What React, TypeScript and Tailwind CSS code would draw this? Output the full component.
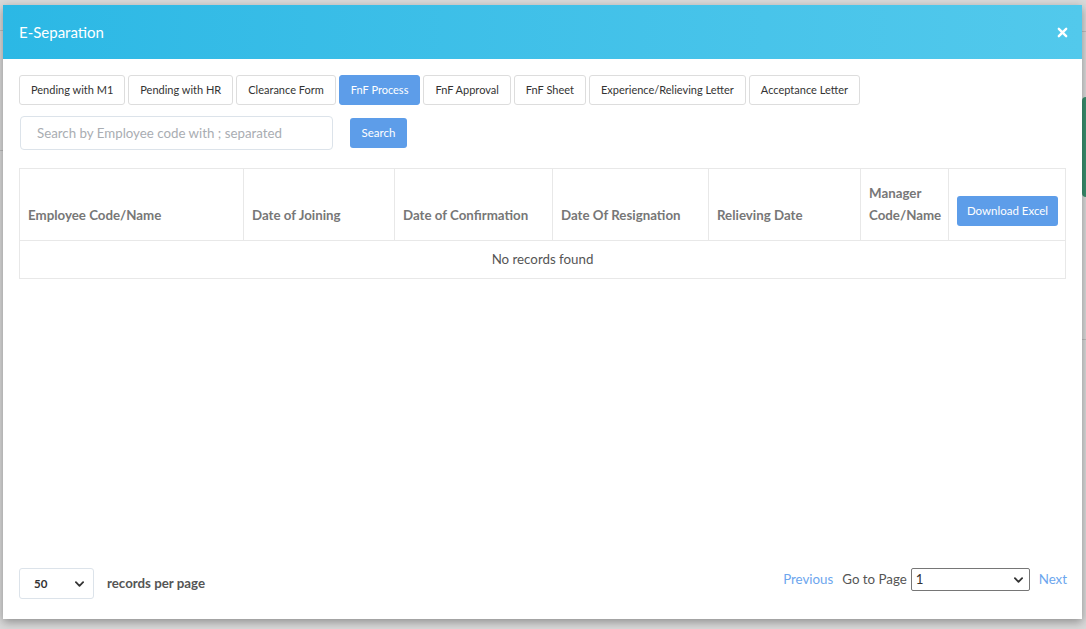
import React from "react";

const tabs = [
  "Pending with M1",
  "Pending with HR",
  "Clearance Form",
  "FnF Process",
  "FnF Approval",
  "FnF Sheet",
  "Experience/Relieving Letter",
  "Acceptance Letter",
];

const columns = [
  { label: "Employee Code/Name", w: "w-[224px]" },
  { label: "Date of Joining", w: "w-[151px]" },
  { label: "Date of Confirmation", w: "w-[158px]" },
  { label: "Date Of Resignation", w: "w-[156px]" },
  { label: "Relieving Date", w: "w-[152px]" },
  { label: "Manager Code/Name", w: "w-[88px]" },
];

function Chevron({ className }: { className?: string }) {
  return (
    <svg viewBox="0 0 10 6" className={className} fill="none">
      <path d="M1 1l4 4 4-4" stroke="currentColor" strokeWidth="2" strokeLinecap="round" strokeLinejoin="round" />
    </svg>
  );
}

export default function App() {
  const active = "FnF Process";

  return (
    <div
      className="relative w-[1086px] h-[629px] overflow-hidden bg-[#d9d9d9]"
      style={{ fontFamily: "Lato, 'Noto Sans', sans-serif" }}
    >
      {/* page behind the overlay */}
      <div className="absolute left-0 top-[30px] w-[3px] h-px bg-[#bdbdbd]" />
      <div className="absolute left-0 top-[150px] w-[3px] h-px bg-[#bdbdbd]" />
      <div className="absolute right-0 top-[31px] w-[4px] h-px bg-[#bdbdbd]" />
      <div className="absolute right-0 top-[97px] w-[4px] h-[100px] rounded-l-sm bg-[#3a8f6e]" />
      <div className="absolute right-0 top-[339px] w-[4px] h-px bg-[#bdbdbd]" />

      <div className="relative ml-[3px] mt-[5px] w-[1079px] h-[614px] bg-white flex flex-col shadow-[0_3px_9px_rgba(0,0,0,0.35)]">
        {/* header */}
        <div className="h-[54px] shrink-0 flex items-center justify-between pl-[16px] pr-[14px] bg-gradient-to-r from-[#2bb8e5] to-[#52c9ec]">
          <div className="text-white text-[15px]">E-Separation</div>
          <svg viewBox="0 0 12 12" className="w-[11px] h-[11px] text-white">
            <path d="M2 2l8 8M10 2l-8 8" stroke="currentColor" strokeWidth="2.6" strokeLinecap="round" />
          </svg>
        </div>

        <div className="flex-1 flex flex-col px-[16px] pt-[16px] pb-[20px]">
          {/* tabs */}
          <div className="flex gap-[3px]">
            {tabs.map((t) => (
              <button
                key={t}
                className={
                  t === active
                    ? "h-[30px] px-[11px] rounded-[3px] border border-[#5d9de9] bg-[#5d9de9] text-white text-[11px]"
                    : "h-[30px] px-[11px] rounded-[3px] border border-[#dddddd] bg-white text-[#333] text-[11px]"
                }
              >
                {t}
              </button>
            ))}
          </div>

          {/* search */}
          <div className="flex items-center mt-[11px] ml-[1px]">
            <input
              placeholder="Search by Employee code with ; separated"
              className="w-[313px] h-[34px] px-[16px] rounded-[4px] border border-[#dce3ea] text-[13.3px] placeholder:text-[#a9adb2] outline-none"
            />
            <button className="ml-[17px] w-[57px] h-[30px] rounded-[3px] bg-[#5d9de9] text-white text-[11.5px]">
              Search
            </button>
          </div>

          {/* table */}
          <table className="mt-[18px] w-[1047px] border-collapse border border-[#e8e8e8] table-fixed">
            <thead>
              <tr className="h-[72px]">
                {columns.map((c) => (
                  <th
                    key={c.label}
                    className={`${c.w} border border-[#e8e8e8] px-[8px] pb-[14px] align-bottom text-left text-[13.3px] font-bold text-[#777] leading-[22px]`}
                  >
                    {c.label}
                  </th>
                ))}
                <th className="border border-[#e8e8e8] px-[8px] pb-[14px] align-bottom text-left">
                  <button className="w-[101px] h-[30px] rounded-[3px] bg-[#5d9de9] text-white text-[11.5px] font-normal">
                    Download Excel
                  </button>
                </th>
              </tr>
            </thead>
            <tbody>
              <tr className="h-[38px]">
                <td colSpan={7} className="text-center text-[13.3px] text-[#555] border border-[#e8e8e8]">
                  No records found
                </td>
              </tr>
            </tbody>
          </table>

          <div className="flex-1" />

          {/* footer */}
          <div className="flex items-start justify-between">
            <div className="flex items-center">
              <div className="relative w-[75px] h-[31px] rounded-[3px] border border-[#dce3ea] flex items-center pl-[14px]">
                <span className="text-[11.5px] font-bold text-[#333]">50</span>
                <Chevron className="absolute right-[9px] top-[12px] w-[9px] h-[6px] text-[#333]" />
              </div>
              <span className="ml-[13px] text-[13.3px] font-bold text-[#555]">records per page</span>
            </div>
            <div className="flex items-center text-[13.3px] mr-[-1px]">
              <span className="text-[#6ca6ee]">Previous</span>
              <span className="ml-[9px] text-[#555]">Go to Page</span>
              <div className="relative ml-[4px] w-[119px] h-[23px] rounded-[2px] border border-[#767676] flex items-center pl-[4px]">
                <span className="text-[13.3px] text-[#333]">1</span>
                <Chevron className="absolute right-[6px] top-[8px] w-[9px] h-[6px] text-[#333]" />
              </div>
              <span className="ml-[9px] text-[#6ca6ee]">Next</span>
            </div>
          </div>
        </div>
      </div>
    </div>
  );
}
